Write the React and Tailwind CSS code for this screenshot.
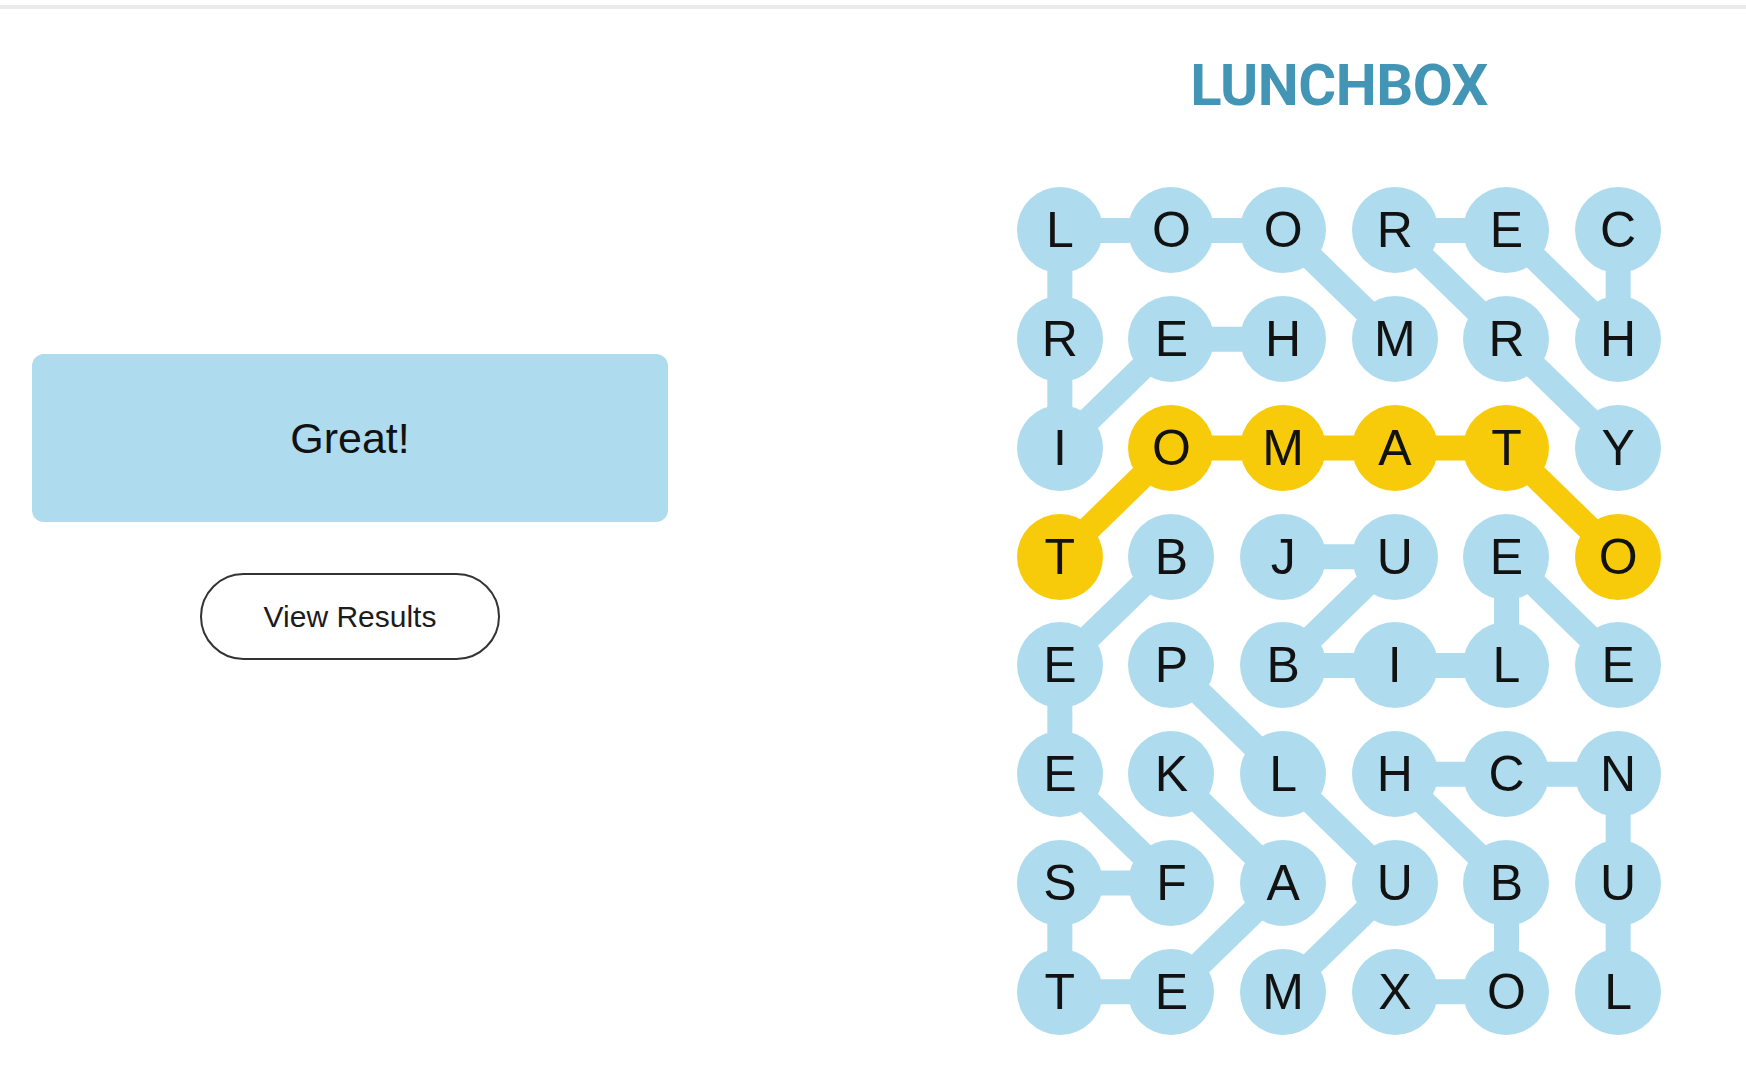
const GRID = ["LOOREC", "REHMRH", "IOMATY", "TBJUEO", "EPBILE", "EKLHCN", "SFAUBU", "TEMXOL"];

const BLUE = "#aedcee";
const YELLOW = "#f8cb0a";

// found words, traced cell by cell [row, col]
const WORDS = [
  { word: "HEIRLOOM", cells: [[1, 2], [1, 1], [2, 0], [1, 0], [0, 0], [0, 1], [0, 2], [1, 3]] },
  { word: "CHERRY", cells: [[0, 5], [1, 5], [0, 4], [0, 3], [1, 4], [2, 5]] },
  { word: "TOMATO", spangram: true, cells: [[3, 0], [2, 1], [2, 2], [2, 3], [2, 4], [3, 5]] },
  { word: "BEEFSTEAK", cells: [[3, 1], [4, 0], [5, 0], [6, 1], [6, 0], [7, 0], [7, 1], [6, 2], [5, 1]] },
  { word: "JUBILEE", cells: [[3, 2], [3, 3], [4, 2], [4, 3], [4, 4], [3, 4], [4, 5]] },
  { word: "PLUM", cells: [[4, 1], [5, 2], [6, 3], [7, 2]] },
  { word: "LUNCHBOX", cells: [[7, 5], [6, 5], [5, 5], [5, 4], [5, 3], [6, 4], [7, 4], [7, 3]] },
];

const CELL_W = 670 / 6;
const CELL_H = 870 / 8;

const yellowCells = new Set(
  WORDS.filter((w) => w.spangram).flatMap((w) => w.cells.map(([r, c]) => `${r}-${c}`))
);

function Connectors() {
  return (
    <svg className="absolute inset-0" width="670" height="870" viewBox="0 0 670 870">
      {WORDS.map((w) => (
        <polyline
          key={w.word}
          points={w.cells
            .map(([r, c]) => `${CELL_W / 2 + c * CELL_W},${CELL_H / 2 + r * CELL_H}`)
            .join(" ")}
          fill="none"
          stroke={w.spangram ? YELLOW : BLUE}
          strokeWidth="25"
          strokeLinejoin="round"
        />
      ))}
    </svg>
  );
}

function Board() {
  return (
    <div className="relative w-[670px] h-[870px]">
      <Connectors />
      <div className="relative grid grid-cols-6 grid-rows-8 w-full h-full">
        {GRID.map((row, r) =>
          row.split("").map((ch, c) => (
            <div key={`${r}-${c}`} className="flex items-center justify-center">
              <div
                className={`flex h-[86px] w-[86px] items-center justify-center rounded-full text-[50px] leading-none text-[#121212] ${
                  yellowCells.has(`${r}-${c}`) ? "bg-[#f8cb0a]" : "bg-[#aedcee]"
                }`}
                style={{ fontFamily: '"Liberation Sans", Arial, sans-serif' }}
              >
                {ch}
              </div>
            </div>
          ))
        )}
      </div>
    </div>
  );
}

export default function App() {
  return (
    <div className="min-h-screen bg-white" style={{ fontFamily: '"Liberation Sans", Arial, sans-serif' }}>
      <div className="h-[4px] mt-[5px] bg-[#ebebeb]" />

      <div className="flex items-start pl-[32px]">
        <div className="mt-[345px] flex w-[636px] flex-col items-center">
          <div className="flex h-[168px] w-full items-center justify-center rounded-[12px] bg-[#aedcee] text-[43px] leading-none text-[#121212]">
            Great!
          </div>
          <button className="mt-[51px] flex h-[87px] w-[300px] items-center justify-center rounded-full border-2 border-[#333] text-[30px] leading-none text-[#1c1c1c]">
            View Results
          </button>
        </div>

        <div className="ml-[336px] mt-[47px] flex w-[670px] flex-col items-center">
          <h1
            className="h-[58px] text-[58px] font-bold leading-none tracking-[-0.5px] text-[#4295b5]"
            style={{ fontFamily: "Roboto, sans-serif" }}
          >
            LUNCHBOX
          </h1>
          <div className="mt-[62px]">
            <Board />
          </div>
        </div>
      </div>
    </div>
  );
}
